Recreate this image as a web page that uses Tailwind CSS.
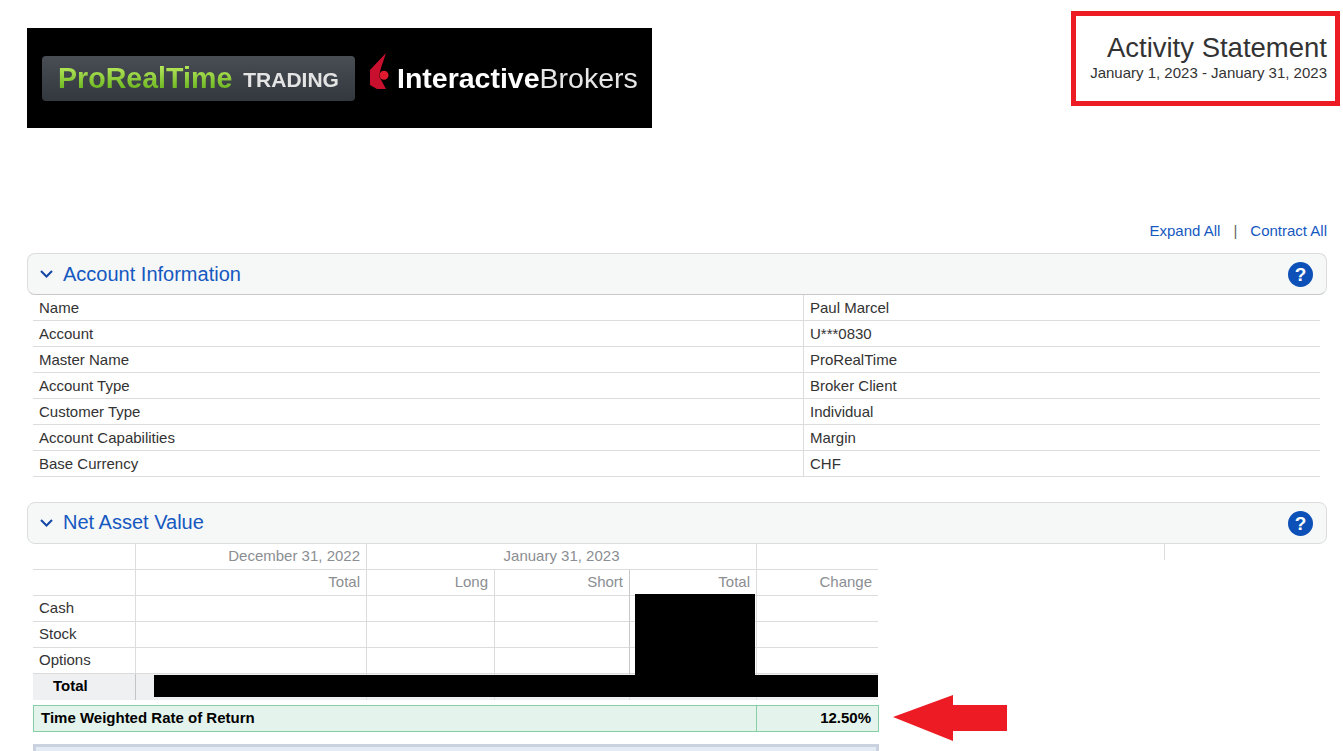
<!DOCTYPE html>
<html lang="en">
<head>
<meta charset="utf-8">
<title>Activity Statement</title>
<script src="https://cdn.jsdelivr.net/npm/@tailwindcss/browser@4"></script>
</head>
<body class="bg-white">
<div class="relative h-[751px] w-[1343px] overflow-hidden pl-[27px] pr-[16px] pt-[11px] font-['Liberation_Sans',Arial,sans-serif] text-[15px] text-[#333]">

  <header class="flex items-start justify-between">
    <div class="mt-[17px] flex h-[100px] w-[625px] items-center bg-black pl-[15px]">
      <div class="flex h-[45px] w-[313px] items-center rounded-[4px] bg-gradient-to-b from-[#494e55] to-[#33383e] pl-[16px] blur-[0.4px]">
        <span class="bg-gradient-to-b from-[#bcec5e] to-[#62b012] bg-clip-text text-[28.6px] font-bold leading-none text-transparent">ProRealTime</span>
        <span class="ml-[11px] mt-[3px] text-[21px] font-bold leading-none text-[#e4e4e4]">TRADING</span>
      </div>
      <svg class="mb-[13px] ml-[14px] h-[40px] w-[20px] blur-[0.4px]" viewBox="0 0 20 40" aria-hidden="true">
        <path fill="#c8102e" d="M17 1 L12 16 L10 24 L17 37 L8 37 L1 33 L1 18 Z"/>
        <circle cx="15" cy="23.3" r="4.5" fill="#e01b2f"/>
      </svg>
      <span class="ml-[8px] text-[28.5px] leading-none text-white blur-[0.4px]"><b>Interactive</b><span class="text-[#e6e6e6]">Brokers</span></span>
    </div>
    <div class="-mr-[13px] flex h-[95px] w-[269px] flex-col items-end border-[5px] border-[#ed1c24] pr-[8px] pt-[16px]">
      <h1 class="text-[27.5px] leading-[32px] text-[#333]">Activity Statement</h1>
      <p class="text-[15px] leading-[17px] text-[#333]">January 1, 2023 - January 31, 2023</p>
    </div>
  </header>

  <nav class="mt-[93px] flex h-[20px] items-center justify-end text-[#1558c0]">
    <a>Expand All</a>
    <span class="mx-[13px] text-[#666]">|</span>
    <a>Contract All</a>
  </nav>

  <section class="mt-[12px]">
    <div class="flex h-[42px] items-center justify-between rounded-[8px] border border-[#dcdcdc] border-b-[#c8c8c8] bg-[#f6f7f7] pl-[12px] pr-[13px]">
      <div class="flex items-center">
        <svg class="h-[8px] w-[13px]" viewBox="0 0 13 8" fill="none" stroke="#1447a6" stroke-width="2" aria-hidden="true"><path d="M1 1 L6.5 6.5 L12 1"/></svg>
        <h2 class="ml-[10px] text-[20px] leading-none text-[#1558c0]">Account Information</h2>
      </div>
      <span class="flex h-[25px] w-[25px] items-center justify-center rounded-full bg-[#0d50b8] text-[19px] font-bold leading-none text-white">?</span>
    </div>
    <table class="ml-[6px] w-[1287px] table-fixed border-separate border-spacing-0">
      <colgroup><col class="w-[771px]"><col></colgroup>
      <tbody>
        <tr><td class="h-[26px] border-b border-r border-[#dcdcdc] pl-[6px] pt-[2px]">Name</td><td class="border-b border-[#dcdcdc] pl-[6px] pt-[2px]">Paul Marcel</td></tr>
        <tr><td class="h-[26px] border-b border-r border-[#dcdcdc] pl-[6px] pt-[2px]">Account</td><td class="border-b border-[#dcdcdc] pl-[6px] pt-[2px]">U***0830</td></tr>
        <tr><td class="h-[26px] border-b border-r border-[#dcdcdc] pl-[6px] pt-[2px]">Master Name</td><td class="border-b border-[#dcdcdc] pl-[6px] pt-[2px]">ProRealTime</td></tr>
        <tr><td class="h-[26px] border-b border-r border-[#dcdcdc] pl-[6px] pt-[2px]">Account Type</td><td class="border-b border-[#dcdcdc] pl-[6px] pt-[2px]">Broker Client</td></tr>
        <tr><td class="h-[26px] border-b border-r border-[#dcdcdc] pl-[6px] pt-[2px]">Customer Type</td><td class="border-b border-[#dcdcdc] pl-[6px] pt-[2px]">Individual</td></tr>
        <tr><td class="h-[26px] border-b border-r border-[#dcdcdc] pl-[6px] pt-[2px]">Account Capabilities</td><td class="border-b border-[#dcdcdc] pl-[6px] pt-[2px]">Margin</td></tr>
        <tr><td class="h-[26px] border-b border-r border-[#dcdcdc] pl-[6px] pt-[2px]">Base Currency</td><td class="border-b border-[#dcdcdc] pl-[6px] pt-[2px]">CHF</td></tr>
      </tbody>
    </table>
  </section>

  <section class="relative mt-[25px]">
    <div class="flex h-[42px] items-center justify-between rounded-[8px] border border-[#dcdcdc] bg-[#f6f7f7] pl-[12px] pr-[13px]">
      <div class="flex items-center">
        <svg class="h-[8px] w-[13px]" viewBox="0 0 13 8" fill="none" stroke="#1447a6" stroke-width="2" aria-hidden="true"><path d="M1 1 L6.5 6.5 L12 1"/></svg>
        <h2 class="ml-[10px] pb-[2px] text-[20px] leading-none text-[#1558c0]">Net Asset Value</h2>
      </div>
      <span class="flex h-[25px] w-[25px] items-center justify-center rounded-full bg-[#0d50b8] text-[19px] font-bold leading-none text-white">?</span>
    </div>
    <div class="absolute left-[1137px] top-[42px] h-[16px] w-px bg-[#dcdcdc]"></div>

    <div class="relative ml-[6px] w-[846px]">
      <table class="w-[845px] table-fixed border-separate border-spacing-0 text-[#8b8e92]">
        <colgroup>
          <col class="w-[103px]"><col class="w-[231px]"><col class="w-[128px]"><col class="w-[135px]"><col class="w-[127px]"><col>
        </colgroup>
        <tbody>
          <tr>
            <td class="h-[26px] border-b border-r border-[#dcdcdc]"></td>
            <td class="border-b border-r border-[#dcdcdc] pr-[6px] text-right">December 31, 2022</td>
            <td colspan="3" class="border-b border-r border-[#dcdcdc] text-center">January 31, 2023</td>
            <td class="border-b border-[#dcdcdc]"></td>
          </tr>
          <tr>
            <td class="h-[26px] border-b border-r border-[#dcdcdc]"></td>
            <td class="border-b border-r border-[#dcdcdc] pr-[6px] text-right">Total</td>
            <td class="border-b border-r border-[#dcdcdc] pr-[6px] text-right">Long</td>
            <td class="border-b border-r border-[#dcdcdc] border-r-[#c8c8c8] pr-[6px] text-right">Short</td>
            <td class="border-b border-r border-[#dcdcdc] pr-[6px] text-right">Total</td>
            <td class="border-b border-[#dcdcdc] pr-[6px] text-right">Change</td>
          </tr>
          <tr class="text-[#333]">
            <td class="h-[26px] border-b border-r border-[#dcdcdc] pl-[6px]">Cash</td>
            <td class="border-b border-r border-[#dcdcdc]"></td><td class="border-b border-r border-[#dcdcdc]"></td><td class="border-b border-r border-[#dcdcdc] border-r-[#c8c8c8]"></td><td class="border-b border-r border-[#dcdcdc]"></td><td class="border-b border-[#dcdcdc]"></td>
          </tr>
          <tr class="text-[#333]">
            <td class="h-[26px] border-b border-r border-[#dcdcdc] pl-[6px]">Stock</td>
            <td class="border-b border-r border-[#dcdcdc]"></td><td class="border-b border-r border-[#dcdcdc]"></td><td class="border-b border-r border-[#dcdcdc] border-r-[#c8c8c8]"></td><td class="border-b border-r border-[#dcdcdc]"></td><td class="border-b border-[#dcdcdc]"></td>
          </tr>
          <tr class="text-[#333]">
            <td class="h-[26px] border-b border-r border-[#dcdcdc] pl-[6px]">Options</td>
            <td class="border-b border-r border-[#dcdcdc]"></td><td class="border-b border-r border-[#dcdcdc]"></td><td class="border-b border-r border-[#dcdcdc] border-r-[#c8c8c8]"></td><td class="border-b border-r border-[#dcdcdc]"></td><td class="border-b border-[#dcdcdc]"></td>
          </tr>
          <tr class="bg-[#eff0f2] text-black">
            <td class="h-[26px] border-r border-[#c4c4c4] pb-[2px] pl-[20px] font-bold">Total</td>
            <td class="border-r border-[#dcdcdc]"></td><td class="border-r border-[#dcdcdc]"></td><td class="border-r border-[#dcdcdc]"></td><td class="border-r border-[#dcdcdc]"></td><td></td>
          </tr>
        </tbody>
      </table>
      <div class="absolute left-[121px] top-[131px] h-[22px] w-[724px] bg-black"></div>
      <div class="absolute left-[602px] top-[50px] h-[82px] w-[120px] bg-black"></div>

      <div class="mt-[5px] flex h-[27px] items-center border border-[#86cfa4] bg-[#e4f3ec] font-bold text-black">
        <div class="flex h-full w-[723px] items-center border-r border-[#86cfa4] pl-[7px]">Time Weighted Rate of Return</div>
        <div class="flex-1 pr-[7px] text-right">12.50%</div>
      </div>
      <div class="mt-[12px] h-[20px] border-[3px] border-[#c9d2de] bg-[#e4ebf5]"></div>
    </div>
  </section>

  <svg class="absolute left-[893px] top-[695px] h-[46px] w-[114px]" viewBox="0 0 114 46" aria-hidden="true">
    <path fill="#ed1c24" d="M0 22 L60 0 L60 10 L114 10 L114 36 L60 36 L60 46 Z"/>
  </svg>
</div>
</body>
</html>
